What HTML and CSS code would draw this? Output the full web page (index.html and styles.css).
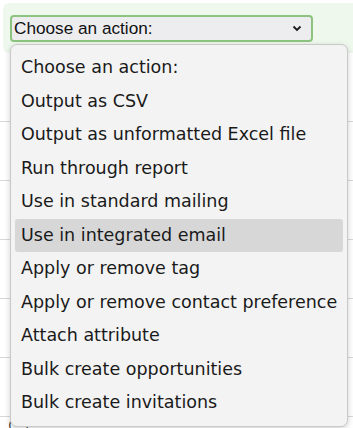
FILE: index.html
```html
<!DOCTYPE html>
<html lang="en">
<head>
    <meta charset="UTF-8">
    <title>Selection actions</title>
    <link rel="stylesheet" href="styles.css">
</head>
<body>

<div class="toolbar">
    <div class="picker">
        <span class="picker-label">Choose an action:</span>
        <svg class="chevron" width="10" height="7" viewBox="0 0 10 7">
            <path d="M1.5 1.5 L5 5 L8.5 1.5" fill="none" stroke="#1a1a1a" stroke-width="1.8"/>
        </svg>
    </div>
</div>

<div class="content">
    <div class="row"><span class="dot"></span></div>
    <div class="row"></div>
    <div class="row"><span class="dot"></span></div>
    <div class="row"></div>
    <div class="row"></div>
    <div class="row"></div>
    <div class="row tog">(−)</div>
</div>

<ul class="menu">
    <li>Choose an action:</li>
    <li>Output as CSV</li>
    <li>Output as unformatted Excel file</li>
    <li>Run through report</li>
    <li>Use in standard mailing</li>
    <li class="hover">Use in integrated email</li>
    <li>Apply or remove tag</li>
    <li>Apply or remove contact preference</li>
    <li>Attach attribute</li>
    <li>Bulk create opportunities</li>
    <li>Bulk create invitations</li>
</ul>

</body>
</html>
```

FILE: styles.css
```css
body {
    margin: 0;
    font-family: "DejaVu Sans", sans-serif;
    background: #fff;
    width: 353px;
    height: 428px;
    overflow: hidden;
    position: relative;
}

.toolbar {
    margin: 3px 0 0 3px;
    height: 50px;
    background: #eef8ec;
    border-radius: 6px 0 0 6px;
    padding: 12px 0 0 7px;
    box-sizing: border-box;
}

.picker {
    width: 303px;
    height: 27px;
    box-sizing: border-box;
    border: 2px solid #8cc47f;
    border-radius: 4px;
    background: #ededf0;
    display: flex;
    align-items: center;
    justify-content: space-between;
    padding: 0 9px 0 2px;
    font-family: "Liberation Sans", Arial, sans-serif;
    font-size: 17.2px;
    color: #111;
}

.content {
    padding-top: 10px;
}

.row {
    height: 58px;
    border-bottom: 1px solid #d8d8d8;
    position: relative;
}

.dot {
    position: absolute;
    left: 12px;
    top: 38px;
    width: 2px;
    height: 2px;
    background: #3a8fd8;
}

.tog {
    height: 10px;
    line-height: 16px;
    font-size: 13px;
    color: #333;
    padding: 1px 0 0 8px;
    border-bottom: none;
}

.menu {
    position: absolute;
    left: 10px;
    top: 44px;
    width: 338px;
    margin: 0;
    padding: 6px 4px;
    box-sizing: border-box;
    list-style: none;
    background: #f3f3f3;
    border: 1px solid #c9c9c9;
    border-radius: 7px;
    box-shadow: 0 2px 6px rgba(0, 0, 0, 0.18);
}

.menu li {
    height: 33.5px;
    line-height: 33.5px;
    padding-left: 6px;
    font-size: 17.5px;
    color: #1a1a1a;
    white-space: nowrap;
    border-radius: 3px;
}

.menu li.hover {
    background: #d7d7d7;
}
```
